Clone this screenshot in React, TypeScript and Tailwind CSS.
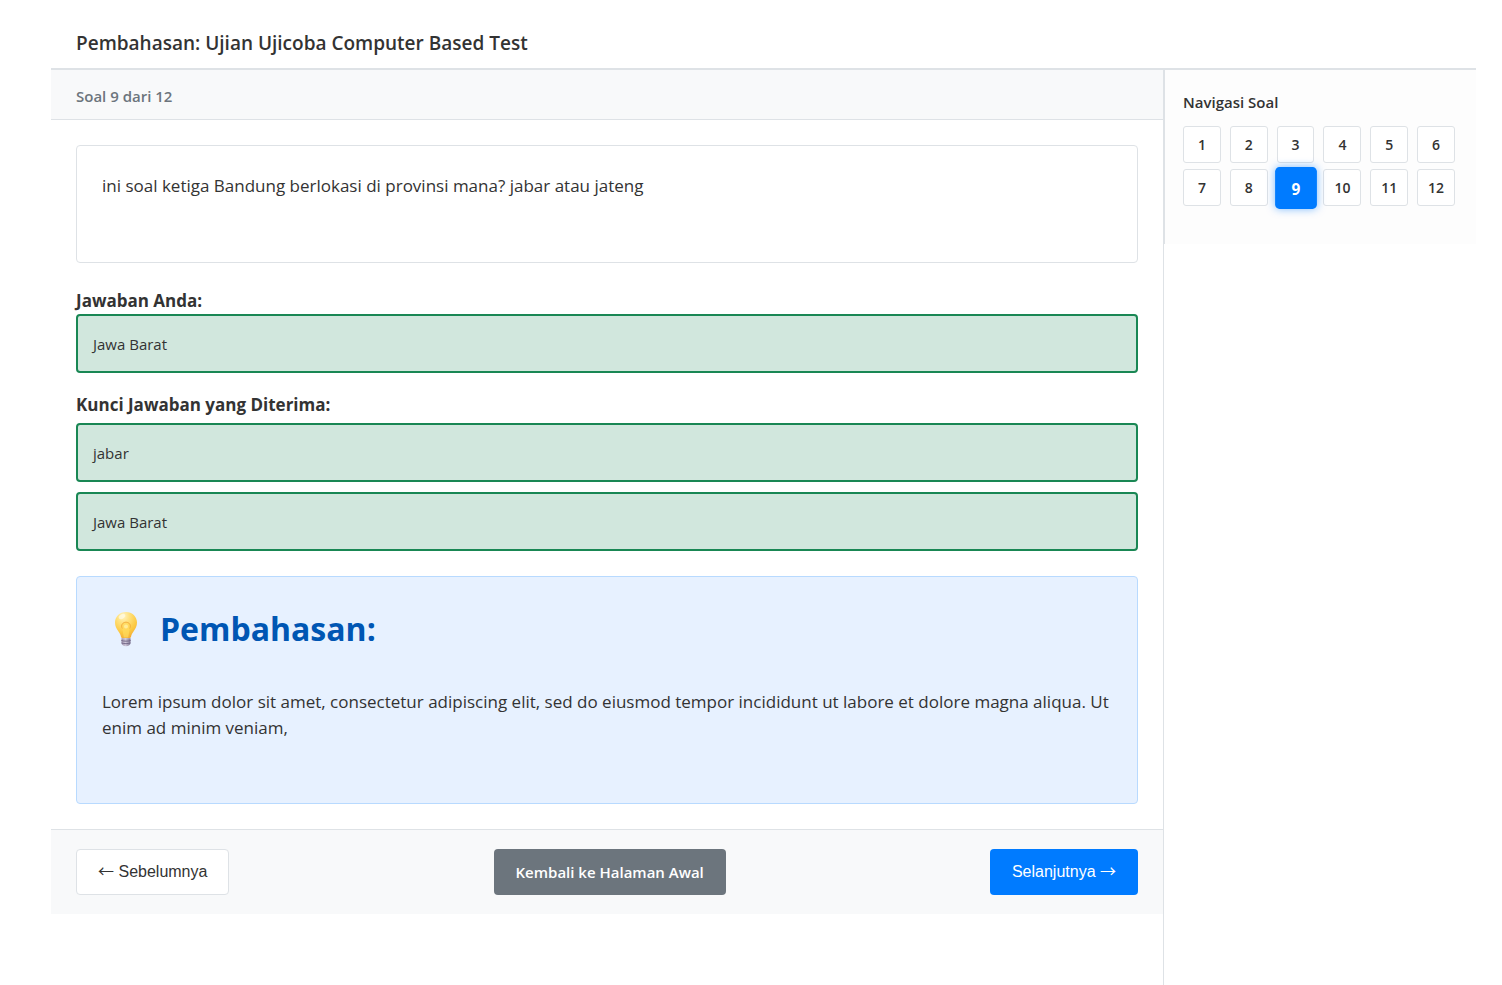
import { useState } from "react";

const questions = [1, 2, 3, 4, 5, 6, 7, 8, 9, 10, 11, 12];

function Bulb() {
  return (
    <svg viewBox="0 0 24 36" className="h-9 w-6" aria-hidden="true">
      <defs>
        <radialGradient id="glass" cx="0.38" cy="0.15" r="0.85">
          <stop offset="0" stopColor="#fff3c0" />
          <stop offset="0.35" stopColor="#ffe07a" />
          <stop offset="0.75" stopColor="#fcc840" />
          <stop offset="1" stopColor="#f3ae38" />
        </radialGradient>
        <linearGradient id="base" x1="0" x2="1">
          <stop offset="0" stopColor="#998da8" />
          <stop offset="0.45" stopColor="#cdc6d8" />
          <stop offset="1" stopColor="#7d7390" />
        </linearGradient>
      </defs>
      <path
        d="M12 1C5.700 1 1 5.700 1 11.600c0 3.500 1.500 6 3.300 8.600 1.500 2.100 2.300 3.600 2.600 5.400.2 1 .9 1.600 1.800 1.600h6.600c.9 0 1.600-.6 1.800-1.600.3-1.800 1.100-3.300 2.600-5.400 1.800-2.600 3.300-5.100 3.300-8.600C23 5.700 18.300 1 12 1z"
        fill="url(#glass)"
      />
      <path d="M9.800 26.500 8.300 17.500c-1.800-3.500.5-6.300 3.700-6.300s5.500 2.800 3.700 6.300l-1.500 9" fill="#ffdc5e" fillOpacity="0.700" />
      <path d="M8.300 17.500c-1.800-3.500.5-6.300 3.700-6.300s5.500 2.800 3.700 6.300" fill="none" stroke="#f0a93a" strokeWidth="0.900" />
      <circle cx="12" cy="15.500" r="2" fill="#ffeb9a" />
      <ellipse cx="8" cy="5.500" rx="3.500" ry="2.200" fill="#fffbe6" opacity="0.7" transform="rotate(-30 8 5.500)" />
      <path d="M7.500 27.200h9v4.800c0 1.800-2 3.200-4.500 3.200S7.500 33.800 7.500 32z" fill="url(#base)" />
      <path d="M7.300 29.500c3 .9 6.400.9 9.400 0M7.500 32c3 .9 6 .9 9 0" fill="none" stroke="#6f6484" strokeWidth="0.900" />
    </svg>
  );
}

function Answer({ children }: { children: string }) {
  return (
    <div className="rounded border-2 border-[#198754] bg-[#d1e7dd] px-[15px] pt-[17px] pb-[15px] text-[15px] leading-[23px]">
      {children}
    </div>
  );
}

function Arrow({ children }: { children: string }) {
  return <span className="font-['Noto_Sans_CJK_SC',sans-serif] leading-none">{children}</span>;
}

export default function App() {
  const [current, setCurrent] = useState(9);

  return (
    <div className="flex min-h-screen flex-col bg-white pr-[26px] pl-[51px] font-['Open_Sans','Noto_Sans',sans-serif] text-[17px] text-[#333]">
      <header className="border-b-2 border-[#dee2e6] px-[25px] pt-[30px] pb-3">
        <h1 className="text-[19px] leading-[26px] font-semibold">Pembahasan: Ujian Ujicoba Computer Based Test</h1>
      </header>

      <div className="flex grow items-stretch">
        <main className="min-w-0 grow border-r border-[#dee2e6]">
          <div className="border-b border-[#dee2e6] bg-[#f8f9fa] px-[25px] pt-[14px] pb-[11px] text-[15px] leading-6 font-semibold text-[#6c757d]">
            Soal {current} dari 12
          </div>

          <div className="p-[25px]">
            <div className="min-h-[118px] rounded border border-[#dee2e6] px-[25px] py-[27px] leading-[26px]">
              ini soal ketiga Bandung berlokasi di provinsi mana? jabar atau jateng
            </div>

            <section className="mt-[25px]">
              <h2 className="leading-[26px] font-bold">Jawaban Anda:</h2>
              <Answer>Jawa Barat</Answer>
            </section>

            <section className="mt-[19px]">
              <h2 className="mb-[5px] leading-[26px] font-bold">Kunci Jawaban yang Diterima:</h2>
              <div className="flex flex-col gap-[10px]">
                <Answer>jabar</Answer>
                <Answer>Jawa Barat</Answer>
              </div>
            </section>

            <section className="mt-[25px] min-h-[228px] rounded border border-[#b8daff] bg-[#e7f1ff] px-[25px] pt-[26px]">
              <h2 className="flex items-center gap-[22px] pl-3 text-[32px] leading-[52px] font-bold text-[#0056b3]">
                <Bulb />
                Pembahasan:
              </h2>
              <p className="mt-[34px] leading-[26px]">
                Lorem ipsum dolor sit amet, consectetur adipiscing elit, sed do eiusmod tempor incididunt ut labore et dolore magna aliqua. Ut enim ad minim veniam,
              </p>
            </section>
          </div>

          <footer className="flex items-center justify-between border-t border-[#dee2e6] bg-[#f8f9fa] px-[25px] py-[19px]">
            <button
              type="button"
              onClick={() => setCurrent(Math.max(1, current - 1))}
              className="h-[46px] rounded border border-[#dee2e6] bg-white px-[21px] font-['Liberation_Sans',sans-serif] text-[16px]"
            >
              <Arrow>←</Arrow> Sebelumnya
            </button>
            <a href="#" className="flex h-[46px] items-center rounded bg-[#6c757d] px-[22px] text-[15px] font-semibold text-white">
              Kembali ke Halaman Awal
            </a>
            <button
              type="button"
              onClick={() => setCurrent(Math.min(12, current + 1))}
              className="h-[46px] rounded bg-[#007bff] px-[22px] font-['Liberation_Sans',sans-serif] text-[16px] text-white"
            >
              Selanjutnya <Arrow>→</Arrow>
            </button>
          </footer>
        </main>

        <aside className="w-[312px] shrink-0 self-start border-l border-[#dee2e6] bg-[#fdfdfd] pt-5 pr-[21px] pb-[37px] pl-[18px]">
          <h2 className="text-[15px] leading-6 font-semibold">Navigasi Soal</h2>
          <nav className="mt-3 grid grid-cols-6 gap-x-[9px] gap-y-[6px]" aria-label="Navigasi Soal">
            {questions.map((n) => (
              <button
                key={n}
                type="button"
                onClick={() => setCurrent(n)}
                className={
                  n === current
                    ? "relative h-[38px] scale-110 rounded bg-[#007bff] text-[14px] font-bold text-white shadow-[0_0_8px_rgba(0,123,255,0.5)]"
                    : "h-[37px] rounded-[3px] border border-[#dee2e6] bg-white text-[14px] font-semibold"
                }
              >
                {n}
              </button>
            ))}
          </nav>
        </aside>
      </div>
    </div>
  );
}
